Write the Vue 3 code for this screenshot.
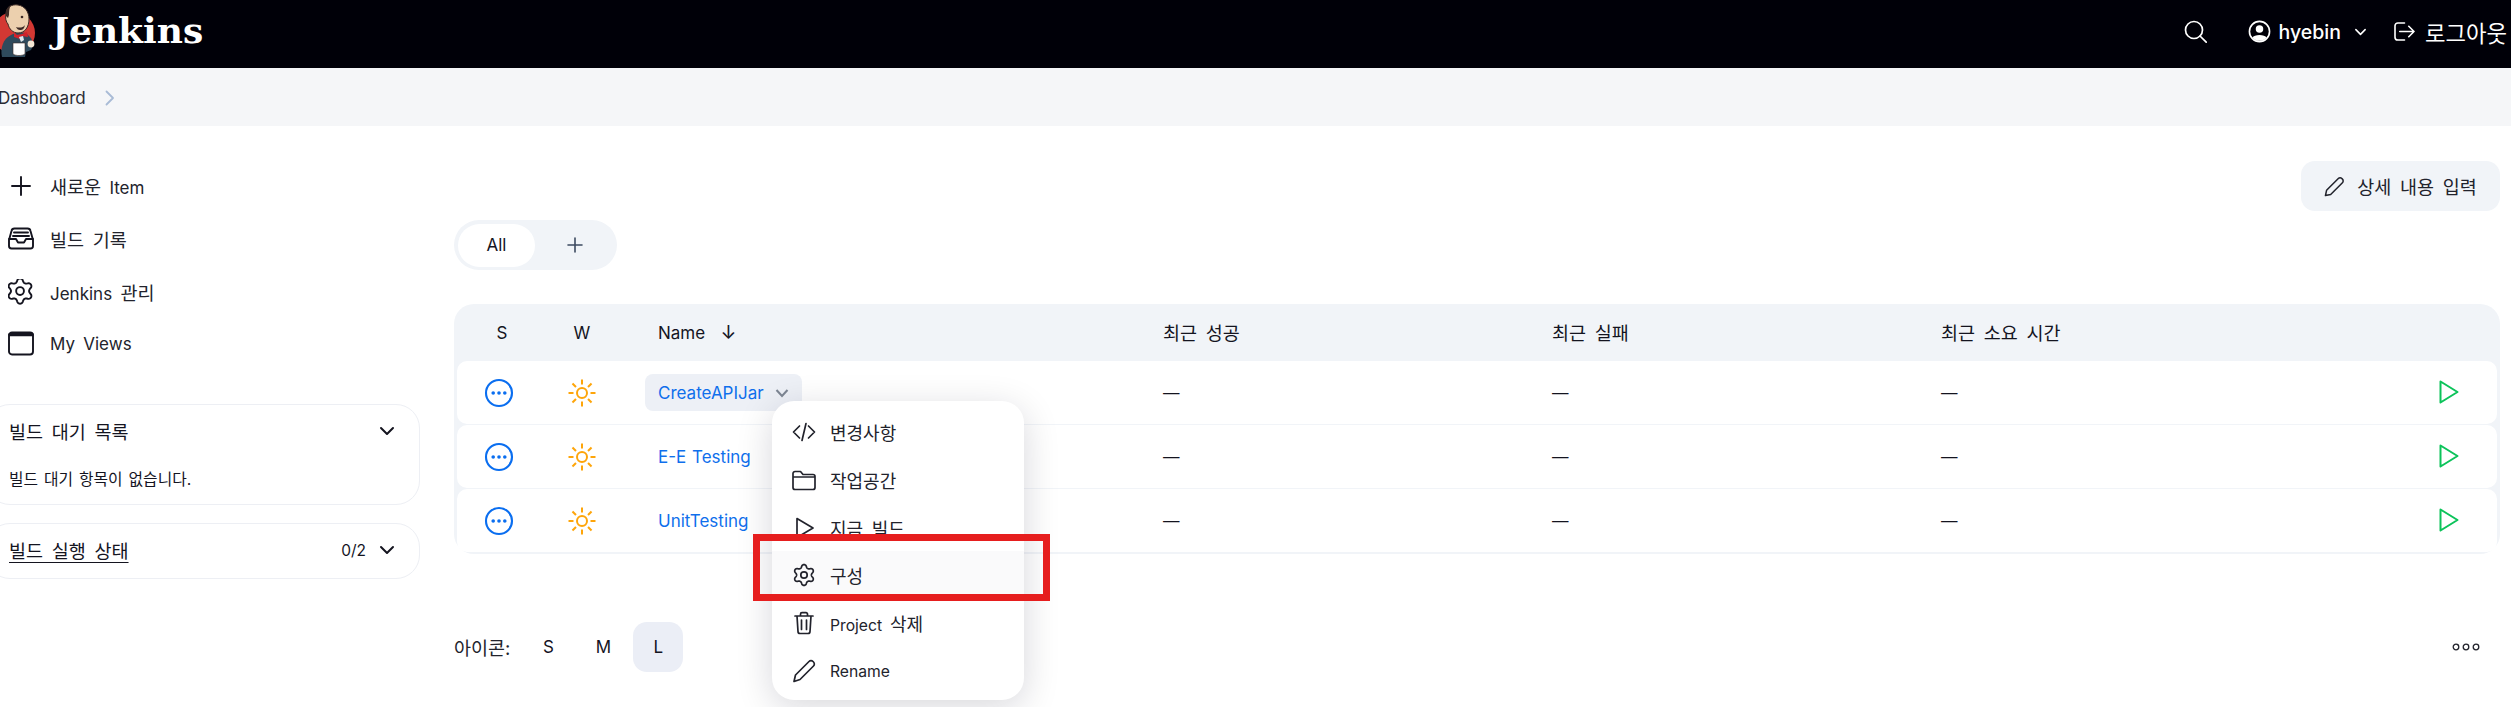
<script setup>
const sidebarItems = [
  { label: '새로운 Item', icon: 'plus' },
  { label: '빌드 기록', icon: 'inbox' },
  { label: 'Jenkins 관리', icon: 'gear' },
  { label: 'My Views', icon: 'window' },
]
const jobs = [
  { name: 'CreateAPIJar', active: true },
  { name: 'E-E Testing', active: false },
  { name: 'UnitTesting', active: false },
]
const rays = [0, 45, 90, 135, 180, 225, 270, 315]
const menu = [
  { label: '변경사항', icon: 'code' },
  { label: '작업공간', icon: 'folder' },
  { label: '지금 빌드', icon: 'play' },
  { label: '구성', icon: 'gear' },
  { label: 'Project 삭제', icon: 'trash' },
  { label: 'Rename', icon: 'pencil' },
]

// Korean runs are set slightly larger than Latin runs, as in the original UI font.
function runs(text) {
  return text.split(/([\uAC00-\uD7A3]+(?: [\uAC00-\uD7A3]+)*)/).filter(Boolean).map((t) => ({
    t,
    ko: /[\uAC00-\uD7A3]/.test(t),
  }))
}

// Six-lobed cog outline centred on (12,12).
function cogPath() {
  const pts = []
  for (let i = 0; i < 120; i++) {
    const a = (i / 120) * Math.PI * 2
    const c = Math.cos(6 * a)
    const r = 8.9 + 1.5 * Math.sign(c) * Math.pow(Math.abs(c), 0.7)
    pts.push(`${(12 + r * Math.sin(a)).toFixed(2)} ${(12 - r * Math.cos(a)).toFixed(2)}`)
  }
  return `M${pts.join('L')}Z`
}
const gear = cogPath()
</script>

<template>
  <div class="page">
    <header class="topbar">
      <div class="brand">
        <svg class="logo" viewBox="0 0 38 68" width="38" height="68">
          <circle cx="14" cy="33" r="21" fill="#d33833" />
          <path d="M2 57C0 48 3 39 11 35l6-3 9 1 5 5c2 4 2 9 0 12l-5 2-1 5z" fill="#2f4a5c" />
          <path d="M6 14C6 7 12 4 18 5c7 1 11 7 11 14 0 8-4 14-11 14-5 0-9-4-10-9-2-2-3-6-2-10z" fill="#ecd0ae" stroke="#3c2a26" stroke-width="1" />
          <path d="M6 16C5 11 7 7 11 5c-2 3-2 7-2 10l-1 3z" fill="#3c2a26" />
          <path d="M16 27c3 1 7 1 9-2-1 4-2 5-5 5-2 0-3-1-4-3z" fill="#3c2a26" />
          <circle cx="22" cy="17" r="1.300" fill="#3c2a26" />
          <path d="M14 32l3 3 5-1 5-2 1 5-6-1-2 3-6-2z" fill="#d3222a" />
          <path d="M19 37l4-1 1 4-3 2z" fill="#dfe8ee" />
          <path d="M13 43h12v11c-3 2-9 2-12 0z" fill="#fff" stroke="#3c2a26" stroke-width=".6" />
          <circle cx="31" cy="44" r="3.400" fill="#f3e6d6" />
        </svg>
        <span class="wordmark">Jenkins</span>
      </div>
      <div class="topbar-actions">
        <svg class="search" viewBox="0 0 23 23" width="23" height="23" fill="none" stroke="#fff" stroke-width="1.700">
          <circle cx="10" cy="10" r="8.500" /><path d="M16 16l6.200 6.200" stroke-linecap="round" />
        </svg>
        <div class="user">
          <svg viewBox="0 0 24 24" width="23" height="23">
            <circle cx="12" cy="12" r="10.500" fill="none" stroke="#fff" stroke-width="1.700" />
            <circle cx="12" cy="9.500" r="3.900" fill="#fff" />
            <path d="M4.500 18.500c2-3.900 13-3.900 15 0-3.700 4.300-11.300 4.300-15 0z" fill="#fff" />
          </svg>
          <span class="username">hyebin</span>
          <svg class="user-chevron" viewBox="0 0 14 10" width="13" height="10" fill="none" stroke="#fff" stroke-width="1.700"><path d="M2 2.500l5 5 5-5" stroke-linecap="round" stroke-linejoin="round" /></svg>
        </div>
        <div class="logout">
          <svg viewBox="0 0 22 20" width="21" height="19" fill="none" stroke="#fff" stroke-width="1.700" stroke-linecap="round" stroke-linejoin="round">
            <path d="M11 1H4a3 3 0 0 0-3 3v12a3 3 0 0 0 3 3h7M6 10h15M15.500 4.500L21 10l-5.500 5.500" />
          </svg>
          <span>로그아웃</span>
        </div>
      </div>
    </header>

    <nav class="breadcrumb">
      <span>Dashboard</span>
      <svg viewBox="0 0 10 16" width="10" height="16" fill="none" stroke="#a9bbd6" stroke-width="1.800"><path d="M1.500 1.500L8 8l-6.500 6.500" stroke-linecap="round" stroke-linejoin="round" /></svg>
    </nav>

    <div class="content">
      <aside class="sidebar">
        <ul class="side-list">
          <li v-for="item in sidebarItems" :key="item.label" class="side-item">
            <svg class="side-icon" viewBox="0 0 26 26" width="26" height="26" fill="none" stroke="#14141f" stroke-width="1.900" stroke-linecap="round" stroke-linejoin="round">
              <path v-if="item.icon === 'plus'" d="M13 4v18M4 13h18" />
              <template v-else-if="item.icon === 'inbox'">
                <path d="M1 14l2.500-9a3 3 0 0 1 3-2.500h13a3 3 0 0 1 3 2.500L25 14v6a2.500 2.500 0 0 1-2.500 2.500h-19A2.500 2.500 0 0 1 1 20z" />
                <path d="M1 13h7l2 3.500h6l2-3.500h7M6 6.500h14M5 10h16" />
              </template>
              <g v-else-if="item.icon === 'gear'" transform="translate(-2.600 -2.600) scale(1.220)">
                <path :d="gear" stroke-width="1.550" /><circle cx="12" cy="12" r="3.200" stroke-width="1.550" />
              </g>
              <template v-else>
                <rect x="1" y="1.500" width="24" height="22" rx="3" />
                <path d="M2 3.500h22" stroke-width="3.500" />
              </template>
            </svg>
            <span><span v-for="(r, i) in runs(item.label)" :key="i" :class="{ ko: r.ko }">{{ r.t }}</span></span>
          </li>
        </ul>

        <section class="card queue">
          <div class="card-head">
            <span class="card-title">빌드 대기 목록</span>
            <svg class="chev" viewBox="0 0 16 10" width="16" height="10" fill="none" stroke="#14141f" stroke-width="2"><path d="M2 2l6 6 6-6" stroke-linecap="round" stroke-linejoin="round" /></svg>
          </div>
          <p class="card-body">빌드 대기 항목이 없습니다.</p>
        </section>
        <section class="card executors">
          <div class="card-head">
            <span class="card-title"><span class="underlined">빌드 실행 상태</span></span>
            <span class="count">0/2</span>
            <svg class="chev" viewBox="0 0 16 10" width="16" height="10" fill="none" stroke="#14141f" stroke-width="2"><path d="M2 2l6 6 6-6" stroke-linecap="round" stroke-linejoin="round" /></svg>
          </div>
        </section>
      </aside>

      <main class="main">
        <div class="actions">
          <button class="edit-btn" type="button">
            <svg viewBox="0 0 22 22" width="21" height="21" fill="none" stroke="#22232c" stroke-width="1.600" stroke-linejoin="round"><path d="M1.500 20.500l1.200-5.500L15 2.700a2.600 2.600 0 0 1 3.700 0l.6.6a2.600 2.600 0 0 1 0 3.700L7 19.300z" /></svg>
            <span>상세 내용 입력</span>
          </button>
        </div>

        <div class="tabs">
          <span class="tab-active">All</span>
          <svg class="tab-plus" viewBox="0 0 16 16" width="16" height="16" fill="none" stroke="#3d4a60" stroke-width="1.600"><path d="M8 1v14M1 8h14" stroke-linecap="round" /></svg>
        </div>

        <div class="table">
          <div class="grid head">
            <span class="center">S</span>
            <span class="center">W</span>
            <span class="name-head">Name <em class="sort">↓</em></span>
            <span class="ko-head">최근 성공</span>
            <span class="ko-head">최근 실패</span>
            <span class="ko-head">최근 소요 시간</span>
            <span></span>
          </div>
          <div v-for="job in jobs" :key="job.name" class="grid row">
            <span class="center">
              <svg class="status" viewBox="0 0 30 30" width="30" height="30" fill="none">
                <circle cx="15" cy="15" r="13" stroke="#0a6ef0" stroke-width="2.100" />
                <circle cx="9.200" cy="15" r="1.800" fill="#0a6ef0" /><circle cx="15" cy="15" r="1.800" fill="#0a6ef0" /><circle cx="20.800" cy="15" r="1.800" fill="#0a6ef0" />
              </svg>
            </span>
            <span class="center">
              <svg viewBox="0 0 30 30" width="30" height="30" fill="none" stroke="#fea50a" stroke-width="2">
                <circle cx="15" cy="15" r="5" />
                <path v-for="a in rays" :key="a" d="M15 1.500v5" :transform="`rotate(${a} 15 15)`" />
              </svg>
            </span>
            <span class="name-cell">
              <span class="job" :class="{ 'job-active': job.active }">
                <span>{{ job.name }}</span>
                <svg v-if="job.active" viewBox="0 0 14 10" width="14" height="10" fill="none" stroke="#7d8693" stroke-width="2"><path d="M1.500 2l5.500 6 5.500-6" /></svg>
              </span>
            </span>
            <span class="dash">—</span>
            <span class="dash">—</span>
            <span class="dash">—</span>
            <span class="play-cell">
              <svg viewBox="0 0 20 24" width="20" height="24" fill="none" stroke="#0cc35a" stroke-width="2" stroke-linejoin="round"><path d="M1.500 1.500L18.500 12 1.500 22.500z" /></svg>
            </span>
          </div>
        </div>

        <div class="footer">
          <div class="sizes">
            <span class="size-label">아이콘:</span>
            <span class="size">S</span>
            <span class="size">M</span>
            <span class="size size-active">L</span>
          </div>
          <svg class="more" viewBox="0 0 28 8" width="28" height="8" fill="none" stroke="#22232c" stroke-width="1.300">
            <circle cx="4" cy="4" r="2.800" /><circle cx="14" cy="4" r="2.800" /><circle cx="24" cy="4" r="2.800" />
          </svg>
        </div>
      </main>
    </div>

    <div class="dropdown">
      <div v-for="m in menu" :key="m.label" class="menu-item" :class="{ 'menu-hover': m.icon === 'gear' }">
        <svg viewBox="0 0 24 24" width="24" height="24" fill="none" stroke="#22232c" stroke-width="1.700" stroke-linecap="round" stroke-linejoin="round">
          <path v-if="m.icon === 'code'" d="M7.500 6L1.500 12l6 6M16.500 6l6 6-6 6M14 3.500L10 20.500" />
          <path v-else-if="m.icon === 'folder'" d="M1 5.500A2 2 0 0 1 3 3.500h5.500l2.500 3h10a2 2 0 0 1 2 2v11a2 2 0 0 1-2 2H3a2 2 0 0 1-2-2zM1 9h22" />
          <path v-else-if="m.icon === 'play'" d="M5 2.500l16 9.500-16 9.500z" />
          <template v-else-if="m.icon === 'gear'"><path :d="gear" /><circle cx="12" cy="12" r="3.200" /></template>
          <path v-else-if="m.icon === 'trash'" d="M3 5h18M8.500 5V3.200A1.500 1.500 0 0 1 10 1.700h4a1.500 1.500 0 0 1 1.500 1.500V5M5 5l1 15.500a2 2 0 0 0 2 2h8a2 2 0 0 0 2-2L19 5M9.500 9v9.500M14.500 9v9.500" />
          <path v-else d="M2 22.500l1.500-6.500L17 2.500a2.800 2.800 0 0 1 4 0l.5.500a2.800 2.800 0 0 1 0 4L8 20.500z" />
        </svg>
        <span><span v-for="(r, i) in runs(m.label)" :key="i" :class="{ ko: r.ko }">{{ r.t }}</span></span>
      </div>
    </div>
    <div class="highlight"></div>
  </div>
</template>

<style>
html, body { margin: 0; background: #fff; overflow: hidden; }
</style>

<style scoped>
.page {
  position: relative;
  width: 2511px;
  height: 707px;
  overflow: hidden;
  background: #fff;
  color: #14141f;
  font-family: Inter, "Noto Sans CJK KR", sans-serif;
  font-size: 16.500px;
  word-spacing: 3.500px;
}
.ko { font-size: 1.090em; }
.topbar {
  height: 68px;
  background: #000008;
  color: #fff;
  display: flex;
  align-items: center;
  justify-content: space-between;
}
.brand { display: flex; align-items: center; }
.logo { display: block; }
.wordmark {
  margin-left: 14px;
  font-family: "DejaVu Serif", serif;
  font-weight: 700;
  font-size: 36px;
  line-height: 1;
  margin-top: -9px;
}
.topbar-actions { display: flex; align-items: center; padding-right: 4px; margin-top: -5px; }
.search { margin-right: 41px; }
.user { display: flex; align-items: center; margin-right: 27px; }
.username { margin-left: 8px; font-size: 19.500px; font-weight: 500; }
.user-chevron { margin-left: 13px; }
.logout { display: flex; align-items: center; gap: 10px; font-size: 22.300px; }
.breadcrumb {
  height: 58px;
  background: #f5f6f8;
  display: flex;
  align-items: center;
  gap: 19px;
  padding-top: 2px;
  box-sizing: border-box;
}
.breadcrumb span { margin-left: -2px; font-size: 17px; color: #2a2b34; }
.content { display: flex; }
.sidebar { width: 420px; flex: none; }
.side-list { list-style: none; margin: 34px 0 0; padding: 0; }
.side-item {
  height: 52.700px;
  display: flex;
  align-items: center;
  padding-left: 8px;
  gap: 16px;
  font-size: 17px;
  color: #22232c;
}
.card {
  margin-left: -14px;
  border: 1.500px solid #edeff4;
  border-radius: 24px;
  box-sizing: border-box;
}
.queue { margin-top: 33px; height: 101px; }
.executors { margin-top: 18px; height: 56px; }
.card-head {
  display: flex;
  align-items: center;
  padding: 0 24px 0 22px;
  height: 53px;
  font-size: 18.500px;
}
.card-title { flex: 1; }
.underlined { text-decoration: underline; text-underline-offset: 4px; }
.count { margin-right: 13px; font-size: 15.500px; }
.card-body { margin: 9px 0 0 22px; font-size: 15.800px; word-spacing: 1.500px; }
.main { flex: 1; min-width: 0; padding: 35px 11px 0 34px; }
.actions { display: flex; justify-content: flex-end; }
.edit-btn {
  width: 199px;
  height: 50px;
  border: 0;
  border-radius: 14px;
  background: #f1f4f8;
  display: flex;
  align-items: center;
  justify-content: center;
  gap: 12px;
  font: inherit;
  font-size: 18.500px;
  word-spacing: 3.500px;
  color: #22232c;
}
.tabs {
  margin-top: 9px;
  width: 163px;
  height: 50px;
  border-radius: 25px;
  background: #f1f4f8;
  box-sizing: border-box;
  padding-left: 4px;
  display: flex;
  align-items: center;
}
.tab-active {
  width: 77px;
  height: 43px;
  border-radius: 22px;
  background: #fff;
  display: flex;
  align-items: center;
  justify-content: center;
  font-size: 17px;
}
.tab-plus { margin-left: 32px; }
.table {
  margin-top: 34px;
  background: #f1f4f8;
  border-radius: 20px;
  padding: 0 3px 2px;
}
.grid {
  display: grid;
  grid-template-columns: 90px 70px 546px 389px 389px 1fr 60px;
  align-items: center;
}
.head { height: 57px; font-size: 17px; }
.ko-head { font-size: 18.500px; margin-top: -2px; }
.name-head { padding-left: 41px; }
.sort { font-style: normal; margin-left: 7px; font-size: 19px; }
.center { display: flex; justify-content: center; }
.status { margin-left: -6px; }
.row { height: 63px; background: #fff; border-radius: 10px; margin-bottom: 1px; }
.row:last-child { margin-bottom: 0; }
.name-cell { padding-left: 28px; }
.job { color: #0f6fec; display: inline-flex; align-items: center; gap: 11px; height: 37px; padding: 0 13px; font-size: 17px; word-spacing: 1px; }
.job-active { background: #edf0f6; border-radius: 8px; }
.dash { color: #14141f; }
.play-cell { display: flex; justify-content: flex-end; padding-right: 38px; margin-top: -1px; }
.footer {
  margin-top: 68px;
  display: flex;
  align-items: center;
  justify-content: space-between;
  padding-right: 20px;
}
.sizes { display: flex; align-items: center; }
.size-label { margin-right: 13px; font-size: 18.500px; color: #22232c; }
.size { width: 50px; height: 50px; margin-right: 5px; border-radius: 14px; display: flex; align-items: center; justify-content: center; font-size: 17px; }
.size-active { background: #ebeef6; }
.dropdown {
  position: absolute;
  left: 772px;
  top: 401px;
  width: 252px;
  height: 299px;
  box-sizing: border-box;
  padding: 7px 0 5px;
  background: #fff;
  border-radius: 22px;
  box-shadow: 0 8px 36px rgba(10, 10, 40, 0.16);
  display: flex;
  flex-direction: column;
}
.menu-item {
  flex: 1;
  display: flex;
  align-items: center;
  gap: 14px;
  padding-left: 20px;
  color: #22232c;
  font-size: 15.700px;
}
.menu-item .ko { font-size: 18px; }
.menu-hover { background: #fafafb; }
.highlight {
  position: absolute;
  left: 753px;
  top: 534px;
  width: 297px;
  height: 67px;
  box-sizing: border-box;
  border: 7px solid #e61e1e;
}
</style>
